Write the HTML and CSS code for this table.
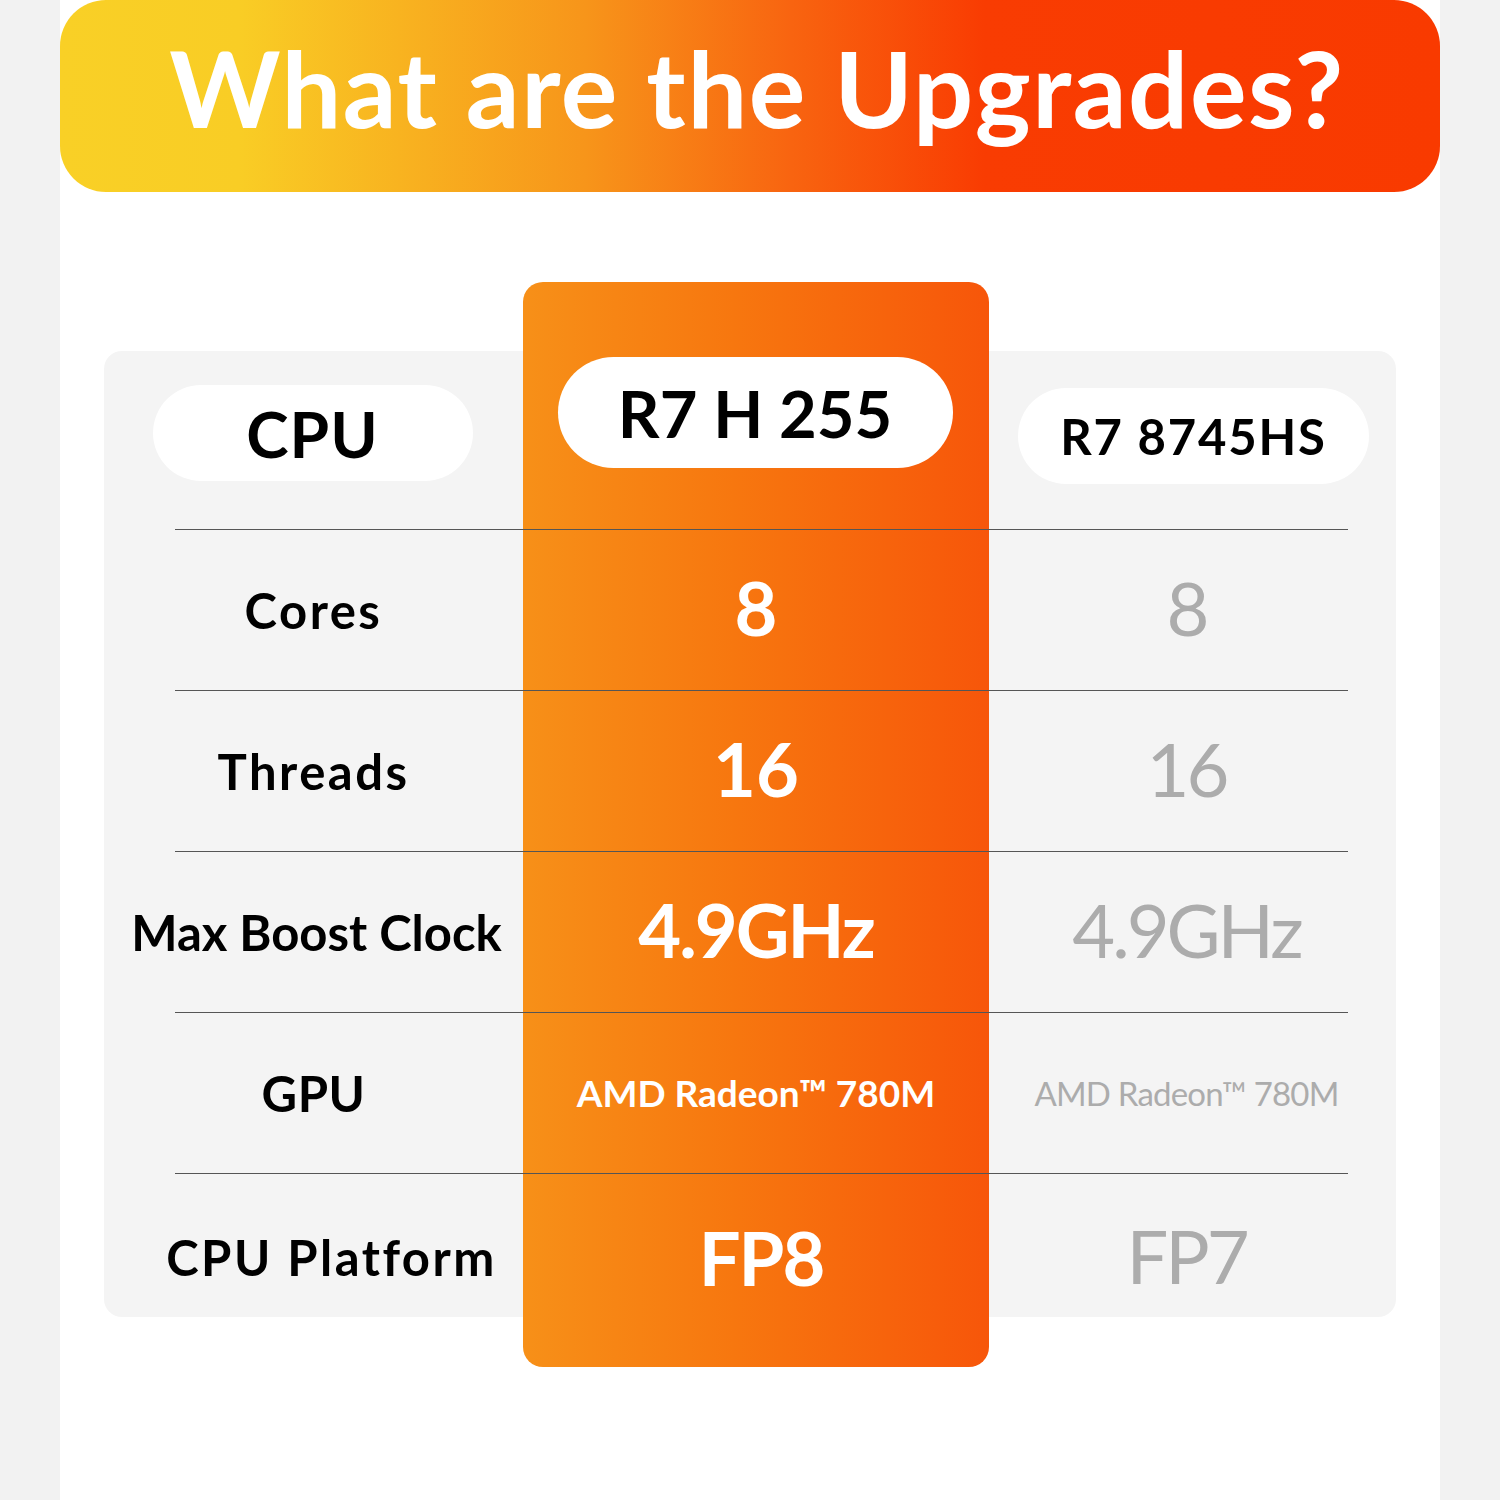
FILE: index.html
```html
<!DOCTYPE html>
<html lang="en">
<head>
<meta charset="utf-8">
<title>What are the Upgrades?</title>
<link rel="stylesheet" href="styles.css">
</head>
<body>
<div class="page">
  <header class="banner">
    <h1 class="title">What are the Upgrades?</h1>
  </header>
  <section class="compare">
    <div class="col col-label">
      <div class="head"><span class="pill pill-side">CPU</span></div>
      <div class="cell wide">Cores</div>
      <div class="cell wide">Threads</div>
      <div class="cell tight">Max Boost Clock</div>
      <div class="cell">GPU</div>
      <div class="cell wide last shifted">CPU Platform</div>
    </div>
    <div class="col col-new">
      <div class="head"><span class="pill pill-main">R7 H 255</span></div>
      <div class="cell big">8</div>
      <div class="cell big">16</div>
      <div class="cell big narrow">4.9GHz</div>
      <div class="cell small">AMD Radeon™ 780M</div>
      <div class="cell big narrow last">FP8</div>
    </div>
    <div class="col col-old">
      <div class="head"><span class="pill pill-old">R7 8745HS</span></div>
      <div class="cell big">8</div>
      <div class="cell big">16</div>
      <div class="cell big">4.9GHz</div>
      <div class="cell small">AMD Radeon™ 780M</div>
      <div class="cell big last">FP7</div>
    </div>
  </section>
</div>
</body>
</html>
```

FILE: styles.css
```css
* { box-sizing: border-box; }
html, body { margin: 0; padding: 0; }
body {
  background: #f2f2f2;
  font-family: "Lato", "Noto Sans", sans-serif;
}
.page {
  width: 1380px;
  min-height: 1500px;
  margin: 0 60px;
  background: #ffffff;
  overflow: hidden;
}
.banner {
  height: 192px;
  border-radius: 46px;
  background: linear-gradient(90deg, #f9d026 0%, #f9cd25 13%, #f7951a 38%, #f86410 53%, #f93c02 67%, #f93a00 100%);
  display: flex;
  align-items: center;
  justify-content: center;
}
.title {
  margin: 0;
  color: #ffffff;
  font-family: "Lato", sans-serif;
  font-weight: 700;
  font-size: 106px;
  line-height: 1;
  letter-spacing: 1.6px;
  padding-left: 14px;
  padding-bottom: 18px;
}
.compare {
  margin: 159px 44px 0;
  background: #f4f4f4;
  border-radius: 18px;
  display: grid;
  grid-template-columns: 419px 466px 407px;
  align-items: start;
}
.col { display: flex; flex-direction: column; }
.head {
  height: 178px;
  display: flex;
  justify-content: center;
  align-items: flex-start;
}
.cell {
  height: 161px;
  display: flex;
  align-items: center;
  justify-content: center;
  background: linear-gradient(#555555, #555555) no-repeat 0 0 / 100% 1px;
  white-space: nowrap;
}
.cell.last {
  height: 144px;
  padding-top: 24px;
}
.col-label .cell {
  background-position: 71px 0;
  background-size: calc(100% - 71px) 1px;
  font-weight: 700;
  font-size: 49px;
  color: #000000;
  letter-spacing: 0.5px;
}
.col-label .cell.wide { letter-spacing: 2.5px; }
.col-label .cell.tight { letter-spacing: 0; padding-left: 6px; }
.col-label .cell.shifted { padding-left: 36px; }
.col-label .head { padding-top: 34px; }
.pill {
  display: flex;
  align-items: center;
  justify-content: center;
  background: #ffffff;
  border-radius: 60px;
  font-weight: 700;
  color: #000000;
}
.pill-side {
  width: 320px;
  height: 96px;
  font-size: 64px;
  letter-spacing: 1px;
  margin-right: 2px;
}
.col-new {
  margin-top: -69px;
  margin-bottom: -50px;
  background: linear-gradient(90deg, #f79018 0%, #f7770f 45%, #f7560a 100%);
  border-radius: 20px;
}
.col-new .head {
  height: 247px;
  padding-top: 75px;
}
.pill-main {
  width: 395px;
  height: 111px;
  font-size: 65px;
  letter-spacing: 0;
  margin-left: -2px;
}
.col-new .cell { color: #ffffff; font-weight: 700; }
.col-new .cell.big { font-size: 74px; padding-bottom: 4px; }
.col-new .cell.narrow { letter-spacing: -2px; }
.col-new .cell.small { font-size: 37px; letter-spacing: 0; }
.col-new .cell.last { height: 194px; padding-top: 24px; padding-bottom: 50px; padding-left: 10px; }
.col-old .head { padding-top: 37px; }
.pill-old {
  width: 351px;
  height: 96px;
  font-size: 49px;
  letter-spacing: 1.8px;
  margin-left: 2px;
}
.col-old .cell {
  background-size: calc(100% - 48px) 1px;
  color: #acacac;
  font-weight: 400;
  padding-right: 12px;
}
.col-old .cell.big { font-size: 74px; letter-spacing: -3px; padding-bottom: 4px; }
.col-old .cell.small { font-size: 33px; letter-spacing: -0.8px; }
```
